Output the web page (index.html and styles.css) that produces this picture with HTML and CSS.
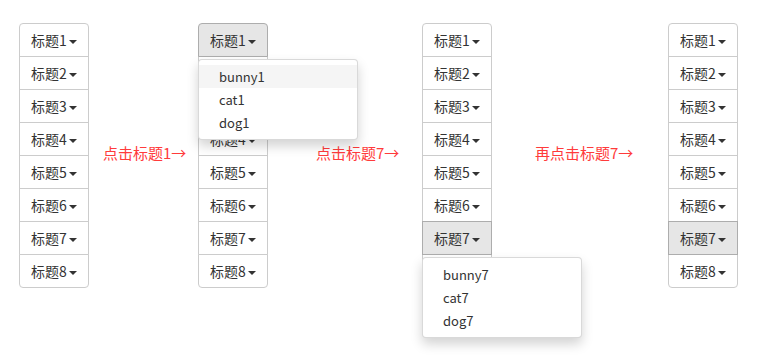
FILE: index.html
```html
<!DOCTYPE html>
<html>
<head>
<meta charset="utf-8">
<link rel="stylesheet" href="styles.css">
</head>
<body>
<div class="stage">
  <div class="group">
    <div class="btn first">标题1<span class="caret"></span></div>
    <div class="btn">标题2<span class="caret"></span></div>
    <div class="btn">标题3<span class="caret"></span></div>
    <div class="btn">标题4<span class="caret"></span></div>
    <div class="btn">标题5<span class="caret"></span></div>
    <div class="btn">标题6<span class="caret"></span></div>
    <div class="btn">标题7<span class="caret"></span></div>
    <div class="btn last">标题8<span class="caret"></span></div>
  </div>
  <div class="label l1">点击标题1→</div>
  <div class="group">
    <div class="btn first active">标题1<span class="caret"></span>
      <ul class="menu">
        <li class="hover">bunny1</li>
        <li>cat1</li>
        <li>dog1</li>
      </ul>
    </div>
    <div class="btn">标题2<span class="caret"></span></div>
    <div class="btn">标题3<span class="caret"></span></div>
    <div class="btn">标题4<span class="caret"></span></div>
    <div class="btn">标题5<span class="caret"></span></div>
    <div class="btn">标题6<span class="caret"></span></div>
    <div class="btn">标题7<span class="caret"></span></div>
    <div class="btn last">标题8<span class="caret"></span></div>
  </div>
  <div class="label l2">点击标题7→</div>
  <div class="group">
    <div class="btn first">标题1<span class="caret"></span></div>
    <div class="btn">标题2<span class="caret"></span></div>
    <div class="btn">标题3<span class="caret"></span></div>
    <div class="btn">标题4<span class="caret"></span></div>
    <div class="btn">标题5<span class="caret"></span></div>
    <div class="btn">标题6<span class="caret"></span></div>
    <div class="btn active">标题7<span class="caret"></span>
      <ul class="menu">
        <li>bunny7</li>
        <li>cat7</li>
        <li>dog7</li>
      </ul>
    </div>
    <div class="btn last">标题8<span class="caret"></span></div>
  </div>
  <div class="label l3">再点击标题7→</div>
  <div class="group">
    <div class="btn first">标题1<span class="caret"></span></div>
    <div class="btn">标题2<span class="caret"></span></div>
    <div class="btn">标题3<span class="caret"></span></div>
    <div class="btn">标题4<span class="caret"></span></div>
    <div class="btn">标题5<span class="caret"></span></div>
    <div class="btn">标题6<span class="caret"></span></div>
    <div class="btn focus">标题7<span class="caret"></span></div>
    <div class="btn last">标题8<span class="caret"></span></div>
  </div>
</div>
</body>
</html>
```
FILE: styles.css
```css
html, body {
  margin: 0;
  padding: 0;
  background: #fff;
}
body {
  font-family: "Noto Sans CJK SC", "Noto Sans", sans-serif;
  color: #333;
  font-size: 14px;
  min-height: 364px;
}
.stage {
  display: flex;
  align-items: center;
  padding: 23px 0 76px 19px;
}
.group {
  display: flex;
  flex-direction: column;
  width: 70px;
}
.btn {
  position: relative;
  box-sizing: border-box;
  height: 34px;
  margin-top: -1px;
  border: 1px solid #ccc;
  background: #fff;
  font-size: 14px;
  line-height: 32px;
  text-align: center;
  white-space: nowrap;
}
.btn.first {
  margin-top: 0;
  border-radius: 4px 4px 0 0;
}
.btn.last {
  border-radius: 0 0 4px 4px;
}
.btn.active, .btn.focus {
  background: #e6e6e6;
  border-color: #adadad;
  z-index: 2;
}
.caret {
  display: inline-block;
  width: 0;
  height: 0;
  margin-left: 2px;
  vertical-align: middle;
  border-top: 4px solid #333;
  border-left: 4px solid transparent;
  border-right: 4px solid transparent;
}
.menu {
  position: absolute;
  left: -1px;
  top: 100%;
  margin: 3px 0 0;
  padding: 5px 0;
  width: 160px;
  box-sizing: border-box;
  list-style: none;
  background: #fff;
  border: 1px solid rgba(0,0,0,.15);
  border-radius: 4px;
  box-shadow: 0 6px 12px rgba(0,0,0,.175);
  text-align: left;
  z-index: 5;
}
.menu li {
  padding: 3px 20px;
  font-size: 13px;
  line-height: 17px;
  color: #333;
}
.menu li.hover {
  background: #f5f5f5;
}
.label {
  box-sizing: border-box;
  color: #ff3b3b;
  font-size: 15px;
  white-space: nowrap;
  padding-bottom: 6px;
}
.l1 { width: 109px; padding-left: 14px; }
.l2 { width: 154px; padding-left: 48px; }
.l3 { width: 176px; padding-left: 43px; }
```
